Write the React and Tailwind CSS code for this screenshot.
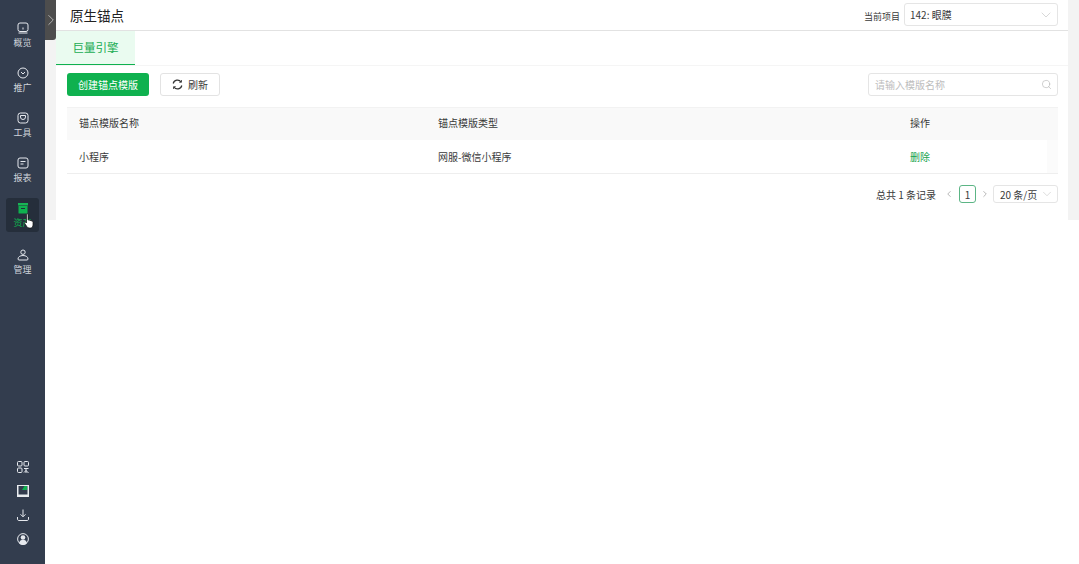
import { ChevronRight, ChevronDown, ChevronLeft, Search } from 'lucide-react';

const cjk = { fontFamily: '"Noto Sans CJK SC", "Liberation Sans", sans-serif' };

const NavIcon = ({ type, active }) => {
  const color = active ? '#0fb14f' : '#e6e9ee';
  if (type === 'overview') {
    return (
      <svg width="12" height="12" viewBox="0 0 12 12" fill="none" stroke={color} strokeWidth="1">
        <rect x="1" y="1" width="10" height="8.5" rx="2" />
        <path d="M6 7.5V5.5M1.5 11h9" />
      </svg>
    );
  }
  if (type === 'promo') {
    return (
      <svg width="12" height="12" viewBox="0 0 12 12" fill="none" stroke={color} strokeWidth="1">
        <circle cx="6" cy="6" r="5" />
        <path d="M4 5l2 2 2-2" />
      </svg>
    );
  }
  if (type === 'tool') {
    return (
      <svg width="12" height="12" viewBox="0 0 12 12" fill="none" stroke={color} strokeWidth="1">
        <rect x="1" y="1" width="10" height="10" rx="2.5" />
        <path d="M3.5 3.5h5v1.5a2.5 2.5 0 0 1-5 0z" />
      </svg>
    );
  }
  if (type === 'report') {
    return (
      <svg width="12" height="12" viewBox="0 0 12 12" fill="none" stroke={color} strokeWidth="1">
        <rect x="1" y="1" width="10" height="10" rx="2" />
        <path d="M3.5 4.5h5M3.5 7h3" />
      </svg>
    );
  }
  if (type === 'asset') {
    return (
      <svg width="12" height="12" viewBox="0 0 12 12">
        <path d="M1 1h10v2.5H1z" fill="#18b455" />
        <path d="M1.5 4h9v7a.5.5 0 0 1-.5.5H2a.5.5 0 0 1-.5-.5z" fill="#0fb14f" />
        <path d="M4 6.5h4" stroke="#20303a" strokeWidth="1" />
      </svg>
    );
  }
  return (
    <svg width="12" height="12" viewBox="0 0 12 12" fill="none" stroke={color} strokeWidth="1">
      <circle cx="6" cy="3.2" r="2.2" />
      <path d="M1 10c0-2 2-3.5 5-3.5s5 1.5 5 3.5c0 .7-.5 1-1 1H2c-.5 0-1-.3-1-1z" />
    </svg>
  );
};

const navItems = [
  { type: 'overview', label: '概览' },
  { type: 'promo', label: '推广' },
  { type: 'tool', label: '工具' },
  { type: 'report', label: '报表' },
  { type: 'asset', label: '资产', active: true },
  { type: 'manage', label: '管理' },
];

function Sidebar() {
  return (
    <aside className="w-[45px] h-full shrink-0 bg-[#333d4e] flex flex-col items-center">
      <nav className="flex flex-col items-center gap-[11px] pt-[18px]">
        {navItems.map((item) => (
          <div
            key={item.label}
            className={`relative w-[33px] h-[34px] pt-[1px] flex flex-col items-center justify-center gap-[2px] rounded-[3px] last:mt-[2px] ${item.active ? 'bg-[#252e3b]' : ''}`}
          >
            <NavIcon type={item.type} active={item.active} />
            <span className={`text-[9px] leading-[13px] ${item.active ? 'text-[#0fb14f]' : 'text-[#cfd3da]'}`}>{item.label}</span>
            {item.active && (
              <svg className="absolute left-[18px] top-[15px]" width="10" height="16" viewBox="0 0 10 16">
                <path d="M2.5 1.2c.6-.6 1.500-.4 1.500.6V7l1 0 3 1c.8.300 1 .800 1 1.500V12c0 1.500-1 3-2.500 3H5c-1 0-1.500-.5-2-1.200L.8 10.500c-.5-.8.500-1.800 1.200-1.100l.5.600z" fill="#ffffff" stroke="#111" strokeWidth="0.7" />
              </svg>
            )}
          </div>
        ))}
      </nav>
      <div className="mt-auto flex flex-col items-center gap-[12px] pb-[19px]">
        <svg width="12" height="12" viewBox="0 0 12 12" fill="none" stroke="#e6e9ee" strokeWidth="1">
          <rect x="0.5" y="0.5" width="4.500" height="4.500" rx="1" />
          <rect x="7" y="0.5" width="4.500" height="4.500" rx="1" />
          <rect x="0.5" y="7" width="4.500" height="4.500" rx="1" />
          <path d="M7 7.500h4.500M9 7.500v4.500M7 11.500l2-2 2.500 2.500" />
        </svg>
        <svg width="12" height="12" viewBox="0 0 12 12">
          <rect width="12" height="12" fill="#e9ecef" />
          <rect x="1.500" y="1" width="9" height="8.500" fill="#333d4e" />
          <path d="M5 5l2.500-4h2.500v4z" fill="#0fb14f" />
        </svg>
        <svg width="12" height="12" viewBox="0 0 12 12" fill="none" stroke="#e6e9ee" strokeWidth="1">
          <path d="M6 0.500v7M3.500 5.300L6 7.800l2.500-2.500" />
          <path d="M0.500 8v2c0 1 .5 1.500 1.500 1.500h8c1 0 1.500-.5 1.500-1.500V8" />
        </svg>
        <svg width="12" height="12" viewBox="0 0 12 12">
          <circle cx="6" cy="6" r="5.400" fill="none" stroke="#e6e9ee" strokeWidth="1" />
          <circle cx="6" cy="4.500" r="2.300" fill="#e6e9ee" />
          <path d="M2 10.300c.5-2.500 2-3.500 4-3.500s3.500 1 4 3.500a5.500 5.500 0 0 1-8 0z" fill="#e6e9ee" />
        </svg>
      </div>
    </aside>
  );
}

function Table() {
  return (
    <div className="ml-[11px] mr-[10px] text-[10px] text-[#3a3a3a]">
      <div className="h-[33px] pb-[3px] flex items-center bg-[#f9f9f9] border-t border-[#f2f2f2]">
        <div className="w-[359px] pl-[12px]">锚点模版名称</div>
        <div className="w-[472px] pl-[12px]">锚点模版类型</div>
        <div className="flex-1 pl-[12px]">操作</div>
      </div>
      <div className="h-[34px] flex border-b border-[#eeeeee]">
        <div className="flex-1 flex items-center">
          <div className="w-[359px] pl-[12px]">小程序</div>
          <div className="w-[472px] pl-[12px]">网服-微信小程序</div>
          <div className="flex-1 pl-[12px] text-[#17a34f]">删除</div>
        </div>
        <div className="w-[11px] bg-[#fbfbfb]" />
      </div>
    </div>
  );
}

export default function App() {
  return (
    <div className="h-[564px] flex bg-white overflow-hidden" style={cjk}>
      <Sidebar />
      <main className="relative flex-1 min-w-0">
        <div className="absolute left-0 top-0 w-[11px] h-[40px] bg-[#4d4d4d] rounded-br-[3px] flex items-center justify-center z-10">
          <ChevronRight size={18} color="#d0d0d0" strokeWidth={1} className="shrink-0" />
        </div>
        <div className="h-[220px] bg-[#f3f3f3] px-[11px]">
          <div className="h-full bg-white">
            <header className="h-[31px] border-b border-[#e2e2e2] flex items-center justify-between pl-[14px] pr-[10px]">
              <h1 className="text-[13.5px] font-normal text-[#222]">原生锚点</h1>
              <div className="flex items-center gap-[4px] text-[9px] text-[#3a3a3a]">
                <span className="mt-[4px]">当前项目</span>
                <div className="w-[154px] h-[23px] border border-[#e5e5e5] rounded-[3px] flex items-center justify-between pl-[5px] pr-[3px] text-[10px] mt-[-1px]">
                  <span>142: 眼膜</span>
                  <ChevronDown size={16} color="#c4c4c4" strokeWidth={1} />
                </div>
              </div>
            </header>
            <div className="h-[35px] border-b border-[#f5f5f5]">
              <div className="w-[79px] h-full bg-[#eafbf0] border-b-[1px] border-[#0fb14f] flex items-center justify-center text-[11.5px] text-[#19ac52]">
                巨量引擎
              </div>
            </div>
            <div className="h-[41px] pl-[11px] pr-[10px] pt-[7px] flex items-start justify-between">
              <div className="flex items-center gap-[11px]">
                <button className="w-[82px] h-[23px] rounded-[3px] bg-[#0fb14f] text-white text-[10px]">创建锚点模版</button>
                <button className="w-[60px] h-[23px] rounded-[3px] bg-white border border-[#e3e3e3] flex items-center justify-center gap-[5px] text-[10px] text-[#3a3a3a]">
                  <svg width="11" height="11" viewBox="0 0 11 11" fill="none" stroke="#333" strokeWidth="1.200">
                    <path d="M1.200 4.500a4.400 4.400 0 0 1 7.900-1.500M9.800 6.500a4.400 4.400 0 0 1-7.900 1.500" />
                    <path d="M9.500 1v2.300H7.200M1.500 10V7.700h2.300" strokeWidth="0.800" />
                  </svg>
                  刷新
                </button>
              </div>
              <div className="w-[190px] h-[23px] border border-[#e5e5e5] rounded-[3px] flex items-center justify-between pl-[6px] pr-[5px] text-[10px] text-[#bdbdbd]">
                <span>请输入模版名称</span>
                <Search size={11} color="#aaa" strokeWidth={1.2} />
              </div>
            </div>
            <Table />
            <div className="mt-[11px] pr-[10px] flex items-center justify-end text-[10px] text-[#3a3a3a]">
              <span className="mr-[8px]">总共 1 条记录</span>
              <ChevronLeft size={10} color="#aaa" />
              <span className="ml-[5px] mr-[4px] w-[17px] h-[18px] border border-[#5cb585] rounded-[3px] flex items-center justify-center">1</span>
              <ChevronRight size={10} color="#aaa" />
              <div className="ml-[3px] w-[65px] h-[18px] border border-[#e5e5e5] rounded-[3px] flex items-center justify-between pl-[6px] pr-[3px]">
                <span>20 条/页</span>
                <ChevronDown size={14} color="#c4c4c4" strokeWidth={1} />
              </div>
            </div>
          </div>
        </div>
      </main>
    </div>
  );
}
